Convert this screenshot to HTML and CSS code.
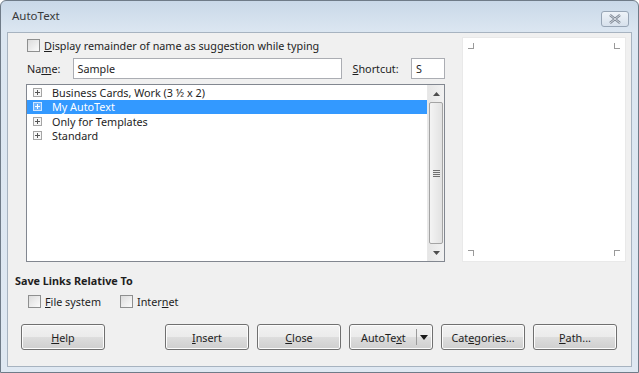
FILE: index.html
```html
<!DOCTYPE html>
<html lang="en">
<head>
  <meta charset="UTF-8">
  <meta name="viewport" content="width=device-width, initial-scale=1.0">
  <title>AutoText</title>
  <link rel="stylesheet" href="styles.css">
</head>
<body>
  <div class="window">
    <div class="titlebar">
      <span class="title">AutoText</span>
      <span class="close-btn">
        <svg width="14" height="10" viewBox="0 0 14 10">
          <path d="M2 1 L12 9 M12 1 L2 9" stroke="#7c8592" stroke-width="2.4" fill="none"/>
          <path d="M2 1 L12 9 M12 1 L2 9" stroke="#e9eef3" stroke-width="0.8" fill="none"/>
        </svg>
      </span>
    </div>
    <div class="client">
      <div class="top">
        <div class="left">
          <label class="check-row"><span class="checkbox"></span><u>D</u>isplay remainder of name as suggestion while typing</label>
          <div class="name-row">
            <span class="lbl">Na<u>m</u>e:</span>
            <span class="field name-field">Sample</span>
            <span class="lbl shortcut-lbl"><u>S</u>hortcut:</span>
            <span class="field short-field">S</span>
          </div>
          <div class="list">
            <div class="rows">
              <div class="row"><span class="expander"></span>Business Cards, Work (3 ½ x 2)</div>
              <div class="row selected"><span class="expander"></span>My AutoText</div>
              <div class="row"><span class="expander"></span>Only for Templates</div>
              <div class="row"><span class="expander"></span>Standard</div>
            </div>
            <div class="scrollbar">
              <div class="arrow">
                <svg width="7" height="4" viewBox="0 0 7 4"><path d="M0 4 L3.5 0 L7 4 Z" fill="#4d4d4d"/></svg>
              </div>
              <div class="thumb"><span class="grip"></span></div>
              <div class="arrow">
                <svg width="7" height="4" viewBox="0 0 7 4"><path d="M0 0 L3.5 4 L7 0 Z" fill="#4d4d4d"/></svg>
              </div>
            </div>
          </div>
        </div>
        <div class="preview">
          <span class="corner tl"></span>
          <span class="corner tr"></span>
          <span class="corner bl"></span>
          <span class="corner br"></span>
        </div>
      </div>
      <div class="links">
        <div class="links-title">Save Links Relative To</div>
        <div class="links-row">
          <label class="check-row"><span class="checkbox"></span><u>F</u>ile system</label>
          <label class="check-row"><span class="checkbox"></span>Inter<u>n</u>et</label>
        </div>
      </div>
      <div class="buttons">
        <span class="btn"><u>H</u>elp</span>
        <span class="spacer"></span>
        <span class="btn"><u>I</u>nsert</span>
        <span class="btn"><u>C</u>lose</span>
        <span class="btn split">
          <span class="split-text">AutoTe<u>x</u>t</span>
          <span class="split-sep"></span>
          <svg width="8" height="5" viewBox="0 0 8 5"><path d="M0 0 L8 0 L4 5 Z" fill="#1a1a1a"/></svg>
        </span>
        <span class="btn">Cat<u>e</u>gories...</span>
        <span class="btn"><u>P</u>ath...</span>
      </div>
    </div>
  </div>
</body>
</html>
```

FILE: styles.css
```css
body {
  margin: 0;
  background: #ffffff;
  font-family: "Noto Sans", "DejaVu Sans", sans-serif;
  font-size: 10.8px;
  color: #1e1e1e;
}
.window {
  width: 637px;
  height: 371px;
  border: 1px solid #6f7b88;
  border-radius: 6px 6px 0 0;
  background: linear-gradient(to bottom, #c9d8e8 0px, #dbe6f1 30px, #dfe8f2 100%);
  display: flex;
  flex-direction: column;
}
.titlebar {
  height: 31px;
  display: flex;
  align-items: center;
  justify-content: space-between;
  padding: 0 9px 0 11px;
}
.title {
  font-size: 11.5px;
  color: #3a3a3a;
  margin-top: -2px;
}
.close-btn {
  width: 26px;
  height: 14px;
  margin-top: 4px;
  border: 1px solid #97a5b5;
  border-radius: 3px;
  background: linear-gradient(to bottom, #eef3f8, #d7e1ec);
  display: flex;
  align-items: center;
  justify-content: center;
}
.client {
  margin: 0 6px 5px 6px;
  flex: 1;
  border: 1px solid #a7b3c0;
  background: #f0f0f0;
  display: flex;
  flex-direction: column;
}
.top {
  display: flex;
  padding-top: 4px;
}
.left {
  margin-left: 18px;
  width: 419px;
}
.check-row {
  display: flex;
  align-items: center;
  height: 16px;
  white-space: nowrap;
}
.left > .check-row {
  margin-left: 1px;
}
.checkbox {
  width: 11px;
  height: 11px;
  border: 1px solid #8e8f8f;
  background: linear-gradient(135deg, #dcdcdc, #fbfbfb);
  margin-right: 4px;
  flex-shrink: 0;
}
.name-row {
  display: flex;
  align-items: center;
  margin-top: 5px;
  height: 21px;
}
.lbl {
  margin-left: 1px;
}
.name-row .lbl:first-child {
  width: 44px;
}
.field {
  border: 1px solid #abadb3;
  background: #ffffff;
  box-sizing: border-box;
  height: 21px;
  display: flex;
  align-items: center;
  padding-left: 4px;
}
.name-field {
  margin-left: auto;
  width: 269px;
}
.shortcut-lbl {
  margin-left: 11px;
  width: 57px;
}
.short-field {
  margin-left: auto;
  width: 34px;
}
.list {
  margin-top: 5px;
  height: 178px;
  box-sizing: border-box;
  border: 1px solid #828790;
  background: #ffffff;
  display: flex;
}
.rows {
  flex: 1;
}
.row {
  height: 14.5px;
  display: flex;
  align-items: center;
  white-space: nowrap;
}
.row.selected {
  background: #3399ff;
  color: #ffffff;
}
.expander {
  width: 7px;
  height: 7px;
  border: 1px solid #a5a5a5;
  margin: 0 10px 0 6px;
  position: relative;
  background: #f7f7f7;
}
.expander::before,
.expander::after {
  content: "";
  position: absolute;
  background: #555555;
}
.expander::before {
  left: 1px;
  top: 3px;
  width: 5px;
  height: 1px;
}
.expander::after {
  left: 3px;
  top: 1px;
  width: 1px;
  height: 5px;
}
.selected .expander {
  border-color: #d0e6ff;
  background: #6fb4ff;
}
.selected .expander::before,
.selected .expander::after {
  background: #ffffff;
}
.scrollbar {
  width: 16px;
  background: linear-gradient(to right, #e6e6e6, #f2f2f2);
  display: flex;
  flex-direction: column;
  border-left: 1px solid #e8e8e8;
}
.arrow {
  height: 17px;
  display: flex;
  align-items: center;
  justify-content: center;
}
.thumb {
  flex: 1;
  margin: 0 1px;
  border: 1px solid #a4a4a4;
  border-radius: 2px;
  background: linear-gradient(to right, #f4f4f4, #e2e2e2);
  display: flex;
  align-items: center;
  justify-content: center;
}
.grip {
  width: 7px;
  height: 7px;
  background: repeating-linear-gradient(to bottom, #6f6f6f 0px, #6f6f6f 1px, #e8e8e8 1px, #e8e8e8 2px);
}
.preview {
  margin-left: 17px;
  width: 164px;
  height: 225px;
  background: #ffffff;
  border: 1px solid #e9e9e9;
  box-sizing: border-box;
  position: relative;
}
.corner {
  position: absolute;
  width: 5px;
  height: 5px;
  border-color: #9a9a9a;
  border-style: solid;
  border-width: 0;
}
.corner.tl {
  left: 5px;
  top: 5px;
  border-right-width: 1px;
  border-bottom-width: 1px;
}
.corner.tr {
  right: 5px;
  top: 5px;
  border-left-width: 1px;
  border-bottom-width: 1px;
}
.corner.bl {
  left: 5px;
  bottom: 5px;
  border-right-width: 1px;
  border-top-width: 1px;
}
.corner.br {
  right: 5px;
  bottom: 5px;
  border-left-width: 1px;
  border-top-width: 1px;
}
.links {
  margin-top: 10px;
  margin-left: 7px;
}
.links-title {
  font-weight: bold;
  height: 17px;
  line-height: 17px;
}
.links-row {
  display: flex;
  margin-left: 12px;
  margin-top: 4px;
}
.links-row .check-row {
  margin-left: 1px;
  margin-right: 18px;
}
.buttons {
  display: flex;
  margin: 15px 0 0 13px;
  gap: 8px;
}
.spacer {
  width: 44px;
}
.btn {
  width: 84px;
  height: 26px;
  box-sizing: border-box;
  border: 1px solid #707070;
  border-radius: 3px;
  background: linear-gradient(to bottom, #f2f2f2 0%, #ebebeb 50%, #dddddd 51%, #cfcfcf 100%);
  display: flex;
  align-items: center;
  justify-content: center;
  box-shadow: inset 0 0 0 1px #fcfcfc;
}
.split {
  justify-content: flex-start;
  padding-left: 11px;
}
.split-text {
  width: 55px;
}
.split-sep {
  width: 1px;
  height: 16px;
  background: #9a9a9a;
  margin-right: 3px;
}
```
